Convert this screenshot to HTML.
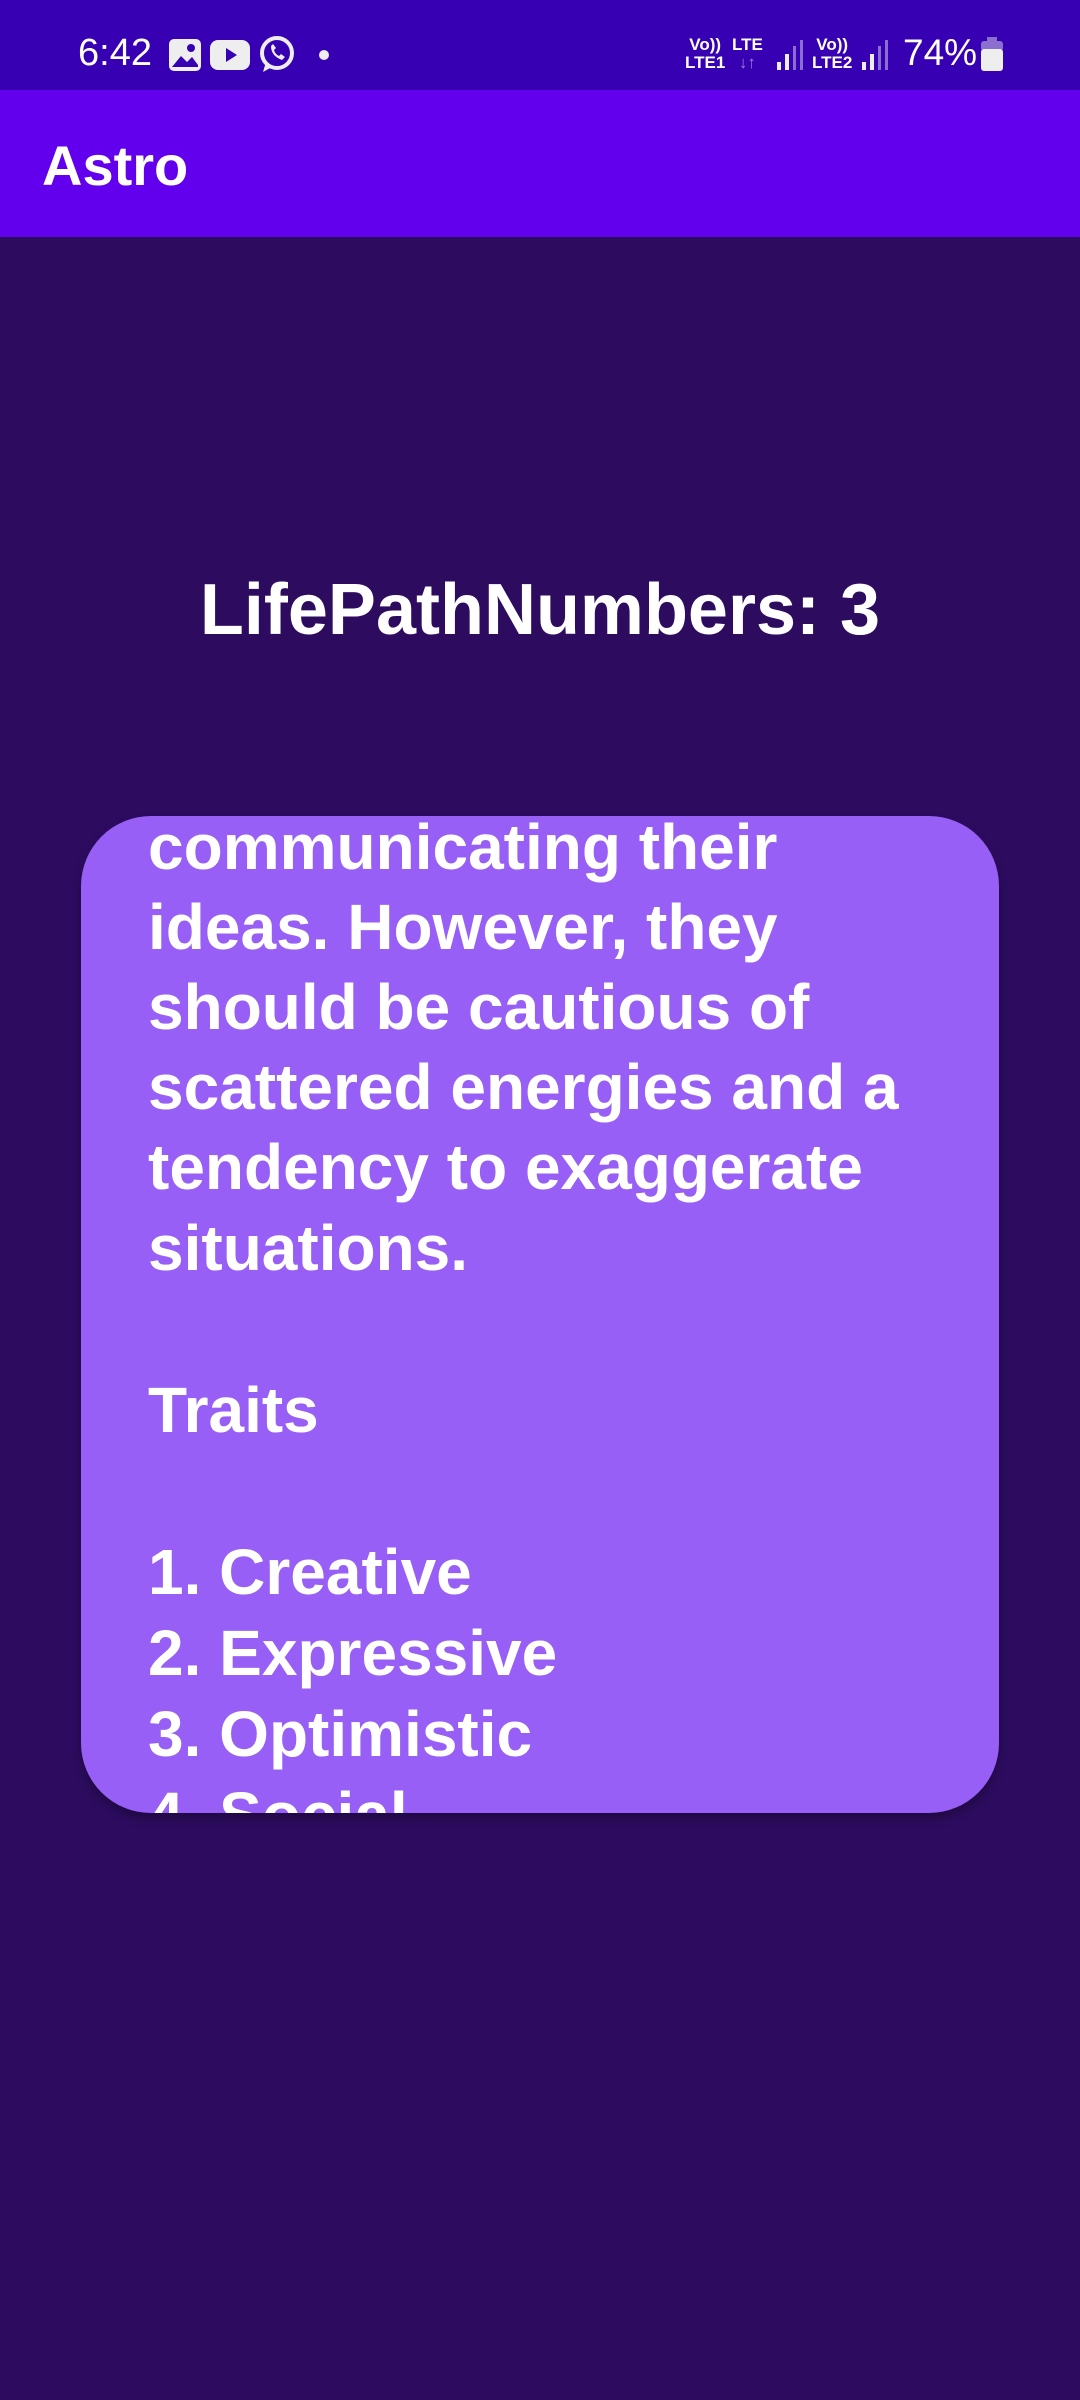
<!DOCTYPE html>
<html><head><meta charset="utf-8"><style>
*{margin:0;padding:0;box-sizing:border-box}
body{width:1080px;height:2400px;background:#2d0c60;font-family:"Liberation Sans",sans-serif;color:#fff;position:relative;overflow:hidden}
.sb{position:absolute;left:0;top:0;width:1080px;height:90px;background:#3700b3}
.ab{position:absolute;left:0;top:90px;width:1080px;height:147px;background:#6200ee}
.t{position:absolute;white-space:nowrap;font-weight:bold}
.card{position:absolute;left:81px;top:816px;width:918px;height:997px;background:#975ff5;border-radius:70px;overflow:hidden;box-shadow:0 6px 10px rgba(0,0,0,.3)}
.card div{position:absolute;left:67px;font-size:64px;font-weight:bold;letter-spacing:0;white-space:nowrap;line-height:1}
</style></head><body>
<div class="sb"></div>
<div class="t" style="left:78px;top:32px;font-size:38px;font-weight:normal">6:42</div>
<svg style="position:absolute;left:168px;top:38px" width="34" height="34" viewBox="0 0 34 34"><rect x="1" y="1" width="32" height="32" rx="5" fill="#eee"/><path d="M4 29 L13 18 L19 24 L24 19 L30 27 V29Z" fill="#3700b3"/><circle cx="23" cy="10" r="4" fill="#3700b3"/></svg>
<svg style="position:absolute;left:210px;top:40px" width="40" height="30"><rect width="40" height="30" rx="8" fill="#eee"/><path d="M16 8 L27 15 L16 22Z" fill="#3700b3"/></svg>
<svg style="position:absolute;left:258px;top:34px" width="38" height="40" viewBox="0 0 38 40"><circle cx="19" cy="19" r="15" fill="none" stroke="#eee" stroke-width="4"/><path d="M5 38 L8 28 L14 33Z" fill="#eee"/><path d="M13 12 q0 10 11 14 l3-3 -4-3 -2 2 q-4-2-5-6 l2-2 -3-4z" fill="#eee"/></svg>
<div style="position:absolute;left:319px;top:50px;width:10px;height:10px;border-radius:50%;background:#eee"></div>
<div class="t" style="left:685px;top:36px;font-size:17px;line-height:18px;text-align:center">Vo))<br>LTE1</div>
<div class="t" style="left:732px;top:36px;font-size:17px;line-height:18px;text-align:center">LTE<br><span style="color:#9a7fd8">↓↑</span></div>
<svg style="position:absolute;left:775px;top:40px" width="30" height="30"><rect x="2" y="22" width="4" height="8" fill="#eee"/><rect x="10" y="14" width="4" height="16" fill="#eee"/><rect x="18" y="6" width="3" height="24" fill="#8a6fd0"/><rect x="25" y="0" width="3" height="30" fill="#8a6fd0"/></svg>
<div class="t" style="left:812px;top:36px;font-size:17px;line-height:18px;text-align:center">Vo))<br>LTE2</div>
<svg style="position:absolute;left:860px;top:40px" width="30" height="30"><rect x="2" y="22" width="4" height="8" fill="#eee"/><rect x="10" y="14" width="4" height="16" fill="#eee"/><rect x="18" y="6" width="3" height="24" fill="#8a6fd0"/><rect x="25" y="0" width="3" height="30" fill="#8a6fd0"/></svg>
<div class="t" style="left:903px;top:32px;font-size:37px;font-weight:normal">74%</div>
<svg style="position:absolute;left:981px;top:37px" width="22" height="34"><rect x="6" y="0" width="10" height="5" fill="#8a6fd0"/><rect x="0" y="4" width="22" height="10" rx="3" fill="#8a6fd0"/><rect x="0" y="12" width="22" height="22" rx="3" fill="#eee"/></svg>
<div class="ab"></div>
<div class="t" style="left:42px;top:133px;font-size:56px">Astro</div>
<div class="t" style="left:0;width:1080px;text-align:center;top:569px;font-size:72px;letter-spacing:0">LifePathNumbers: 3</div>
<div class="card">
<div style="top:-1px">communicating their</div>
<div style="top:79px">ideas. However, they</div>
<div style="top:159px">should be cautious of</div>
<div style="top:239px">scattered energies and a</div>
<div style="top:319px">tendency to exaggerate</div>
<div style="top:400px">situations.</div>
<div style="top:562px">Traits</div>
<div style="top:724px">1. Creative</div>
<div style="top:805px">2. Expressive</div>
<div style="top:886px">3. Optimistic</div>
<div style="top:967px">4. Social</div>
</div>
</body></html>
